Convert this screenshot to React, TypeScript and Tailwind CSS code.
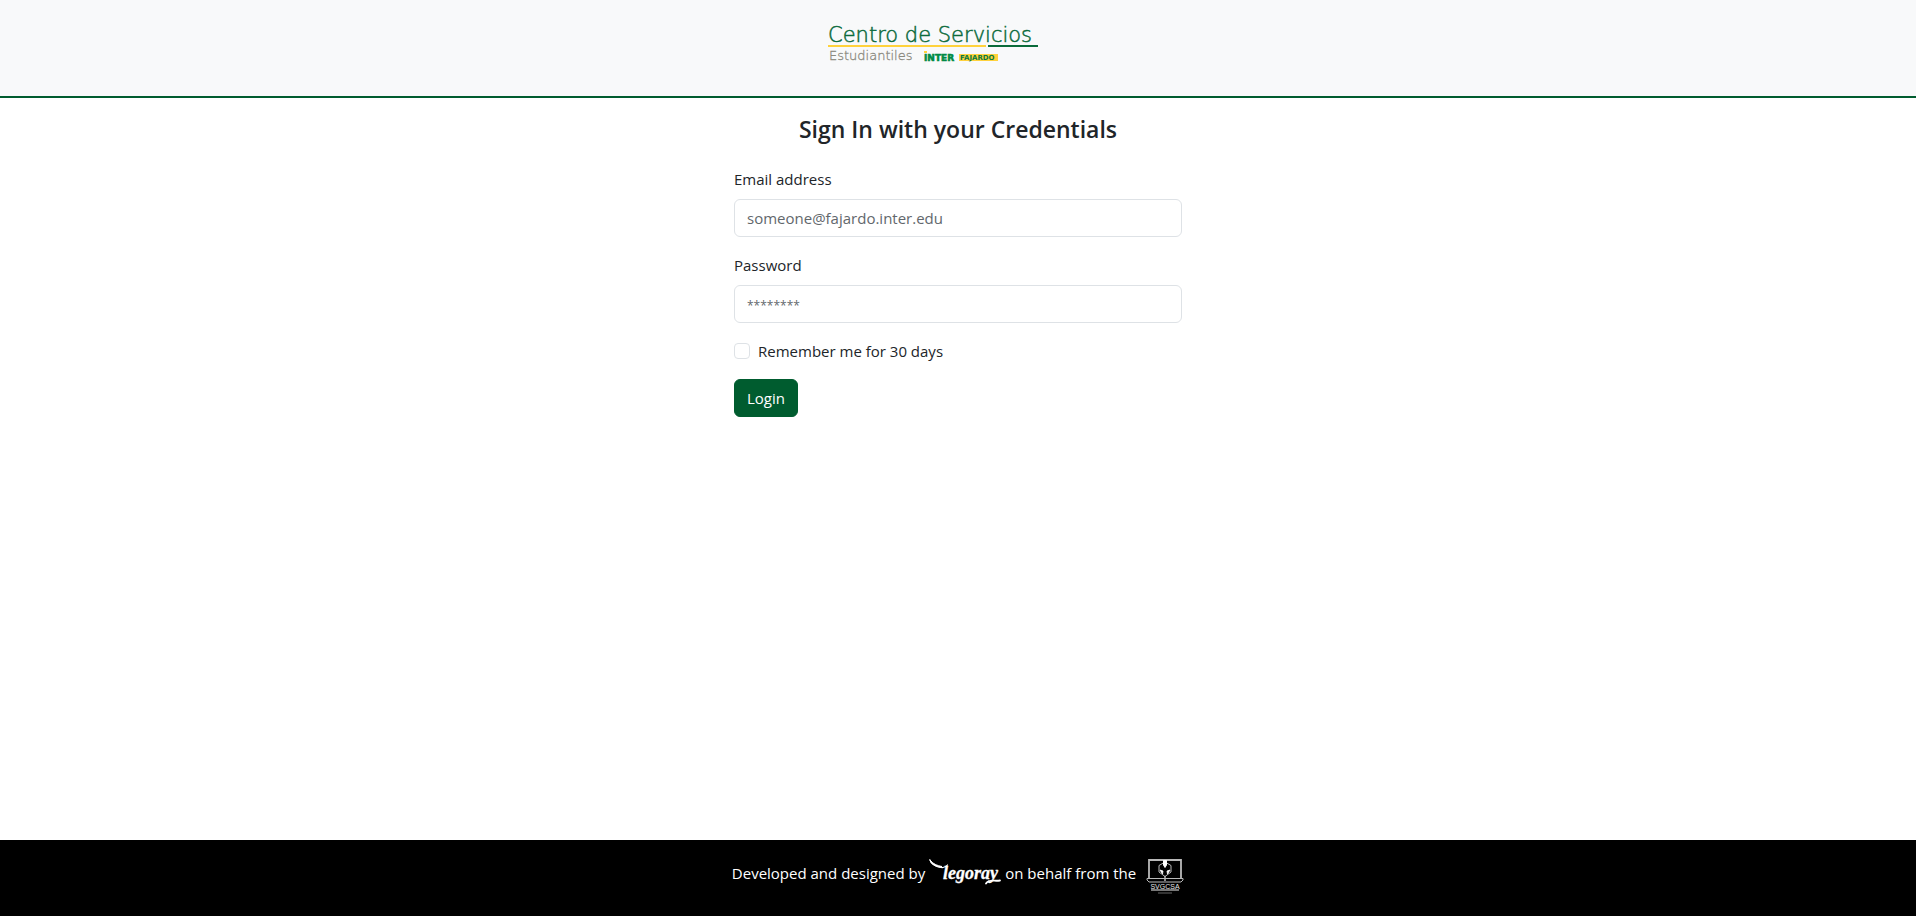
import React from "react";

function CentroLogo() {
  return (
    <a href="#" className="block w-[260px]" aria-label="Centro de Servicios Estudiantiles">
      <svg viewBox="0 0 260 56" className="block w-full">
        <text
          x="0"
          y="22"
          stroke="#0c6b3c"
          strokeWidth="0.5"
          className="fill-[#0c6b3c] font-['DejaVu_Sans',sans-serif] text-[21px] font-extralight"
        >
          Centro de Servicios
        </text>
        <rect x="0" y="25" width="158" height="2" fill="#ffd23c" />
        <rect x="160" y="25" width="50" height="2" fill="#0a6b3a" />
        <text
          x="1"
          y="40"
          stroke="#8b8a80"
          strokeWidth="0.3"
          className="fill-[#8b8a80] font-['DejaVu_Sans',sans-serif] text-[13px] font-extralight"
        >
          Estudiantiles
        </text>
        <text
          x="96"
          y="41"
          stroke="#008a45"
          strokeWidth="0.6"
          className="fill-[#008a45] font-['DejaVu_Sans',sans-serif] text-[9px] font-bold"
        >
          INTER
        </text>
        <rect x="96" y="31" width="3" height="2" fill="#ffd23c" />
        <rect x="131" y="34" width="39" height="7" fill="#ffd23c" />
        <text x="132" y="40" className="fill-[#0a7a3f] font-['DejaVu_Sans',sans-serif] text-[7px] font-bold">
          FAJARDO
        </text>
      </svg>
    </a>
  );
}

function LegorayLogo() {
  return (
    <svg viewBox="0 0 72 28" className="block h-7 w-[72px] shrink-0" fill="none" stroke="#fff" strokeLinecap="round">
      <path d="M1 1C1.500 4 6 7.500 12 8.500C15 9 17 8 18.500 6" strokeWidth="1.200" />
      <path d="M1 1C4 5 8 6.500 13 7.500L11 8.200C6 7.500 1.500 4.500 1 1Z" fill="#fff" strokeWidth="1" />
      <text
        x="14"
        y="20"
        className="fill-white stroke-white [stroke-width:0.3px] font-['Liberation_Serif',serif] text-[18px] font-bold italic"
      >
        legoray
      </text>
      <path d="M57 24.500C60 20 65 22.500 71 21.500" strokeWidth="1.800" />
    </svg>
  );
}

function SvgcsaLogo() {
  return (
    <svg viewBox="0 -7 38 44" className="block h-11 w-[38px] shrink-0" fill="none" stroke="#b9b9b9">
      <path d="M3 20V2H35V20" strokeWidth="1.800" />
      <path d="M1 20.500H37V22L35 24H3L1 22Z" strokeWidth="1" />
      <path d="M19 4L25 7.500V14L19 18.500L13 14V7.500Z" strokeWidth="1" />
      <path d="M17.500 2.500H20.500V7L19 9.500L17.500 7Z" fill="#fff" stroke="#fff" />
      <path d="M14 12L17 13L16.500 16ZM24 12L21 13L21.500 16Z" fill="#fff" stroke="#fff" strokeWidth="0.800" />
      <path d="M19 18V23" strokeWidth="1.500" />
      <text
        x="19"
        y="31"
        textAnchor="middle"
        stroke="none"
        className="fill-[#e5e5e5] font-['Liberation_Sans',sans-serif] text-[7px]"
      >
        SVGCSA
      </text>
      <path d="M5 32H33" stroke="#eee" />
      <path d="M12 35H26" stroke="#666" />
    </svg>
  );
}

const fieldClass =
  "block w-full rounded-md border border-[#dee2e6] bg-white px-3 py-[6px] leading-6 text-[#212529] placeholder:text-[#62676c] placeholder:opacity-100";

export default function App() {
  return (
    <div className="flex min-h-screen flex-col bg-white font-['Open_Sans',sans-serif] text-[15px] leading-6 text-[#212529]">
      <header className="flex justify-center border-b-2 border-[#005c2f] bg-[#f8f9fa] py-5">
        <CentroLogo />
      </header>

      <main className="mx-auto w-full max-w-md grow pt-4">
        <h1 className="mb-[22px] text-center text-[23px] leading-[31px] font-semibold">Sign In with your Credentials</h1>
        <form className="flex flex-col items-start gap-4">
          <div className="w-full">
            <label htmlFor="email" className="mb-2 block">
              Email address
            </label>
            <input id="email" type="email" placeholder="someone@fajardo.inter.edu" className={fieldClass} />
          </div>
          <div className="w-full">
            <label htmlFor="password" className="mb-2 block">
              Password
            </label>
            <input
              id="password"
              type="password"
              placeholder="********"
              className={`${fieldClass} placeholder:text-xs`}
            />
          </div>
          <div className="flex items-center gap-2">
            <input
              id="remember"
              type="checkbox"
              className="size-4 appearance-none rounded border border-[#dee2e6] bg-white checked:bg-[#005c2f]"
            />
            <label htmlFor="remember">Remember me for 30 days</label>
          </div>
          <button type="submit" className="rounded-md border border-[#005c2f] bg-[#005c2f] px-3 py-[6px] text-white">
            Login
          </button>
        </form>
      </main>

      <footer className="flex h-[76px] items-center justify-center bg-black pb-[10px] text-white">
        <span>Developed and designed by</span>
        <a href="#" aria-label="Legoray" className="mx-1">
          <LegorayLogo />
        </a>
        <span>on behalf from the</span>
        <a href="#" aria-label="SVGCSA" className="ml-2.5">
          <SvgcsaLogo />
        </a>
      </footer>
    </div>
  );
}
